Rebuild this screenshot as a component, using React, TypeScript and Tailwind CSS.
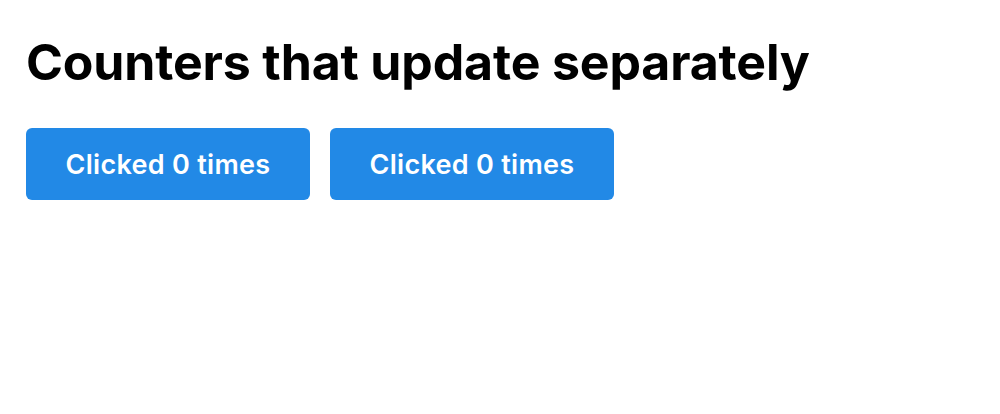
import React, { useState } from "react";

function Counter() {
  const [count, setCount] = useState(0);
  return (
    <button
      onClick={() => setCount(count + 1)}
      className="h-[72px] px-[39.5px] rounded-[6px] bg-[#2289e6] text-white text-[27px] font-semibold leading-none tracking-[0.3px]"
    >
      Clicked {count} times
    </button>
  );
}

export default function App() {
  return (
    <div className="min-h-[414px] bg-white px-[26px] pt-[30px]" style={{ fontFamily: "Inter, 'Noto Sans', sans-serif" }}>
      <h1 className="text-[50px] font-bold leading-[64px] text-black tracking-[-0.15px]">Counters that update separately</h1>
      <div className="mt-[34px] flex gap-[20px]">
        <Counter />
        <Counter />
      </div>
    </div>
  );
}
